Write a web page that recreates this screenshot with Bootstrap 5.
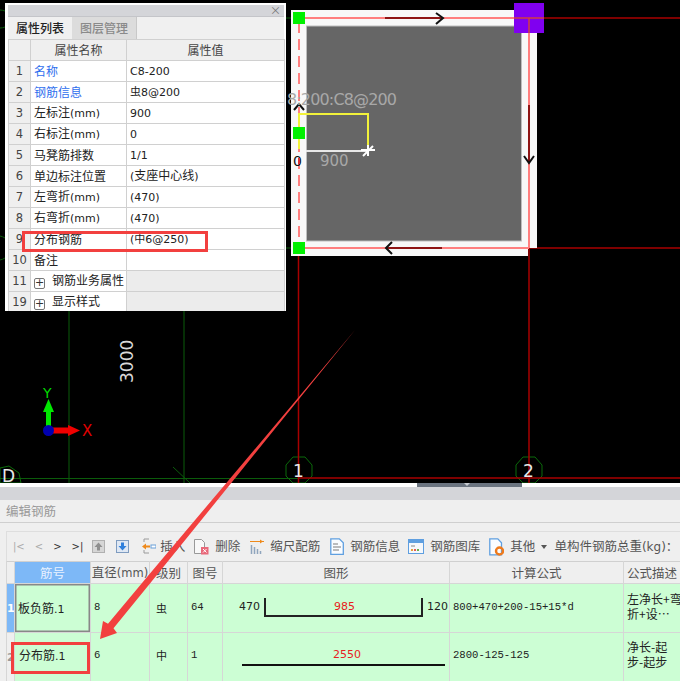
<!DOCTYPE html>
<html lang="zh">
<head>
<meta charset="utf-8">
<title>编辑钢筋</title>
<link href="https://cdn.jsdelivr.net/npm/bootstrap@5.3.0/dist/css/bootstrap.min.css" rel="stylesheet">
<style>
html,body{margin:0;background:#fff}
body{position:relative;width:680px;height:681px;overflow:hidden;font-family:"Noto Sans CJK SC","DejaVu Sans",sans-serif;font-size:12px;color:#333}
.lat{font-family:"DejaVu Sans",sans-serif;font-size:11px}
.mono{font-family:"Liberation Mono",monospace;font-size:10.6px;color:#222}
.cad-stage{position:relative;height:487px;background:#fff}
.cad-svg{display:block;background:#000}
.cad-svg text{font-family:"DejaVu Sans",sans-serif}
.prop-panel{position:absolute;left:5px;top:3px;width:281px;height:308px;background:#fff;padding:2px 2px 0 3px;overflow:hidden}
.panel-title{height:11px;background:#d4d5d9;font-size:11px;line-height:11px;color:#777;padding-right:3px}
.panel-tabs{height:23px;background:#f0f0f0;border-top:1px solid #c4c5c9;flex-wrap:nowrap}
.panel-tab{width:64px;line-height:21px;text-align:center;color:#222;font-weight:500}
.panel-tab.off{width:65px;background:#dcdcdc;color:#8a8a8a;border-right:1px solid #c8c8c8}
.prop-grid{width:276px;table-layout:fixed;--bs-table-border-color:#d0d0d0;--bs-table-bg:#fff;margin:0;border-top:1px solid #d0d0d0;border-left:1px solid #d0d0d0}
.prop-grid td,.prop-grid th{height:21px;padding:0 0 0 3px;font-weight:400;line-height:14px;color:#222;white-space:nowrap;overflow:hidden;vertical-align:middle}
.prop-grid thead th{text-align:center;background:#efefef;color:#444;padding:0}
.prop-grid .ix{padding:0;text-align:center;background:#efefef;color:#444;font-family:"DejaVu Sans",sans-serif;font-size:11.5px}
.prop-grid .lnk{color:#2f6fee}
.prop-grid .gp{background:#ececec}
.plus-box{display:inline-block;width:11px;height:11px;border:1px solid #777;border-radius:2px;margin:0 7px 0 0;line-height:8px;text-align:center;font-size:11px;color:#333;vertical-align:-1px;font-family:"DejaVu Sans",sans-serif}
.drag-strip{position:absolute;left:417px;top:483px;width:105px;height:4px;background:#6b7480}
.drag-strip::after{content:"";position:absolute;left:47px;top:0;border:3px solid transparent;border-top-color:#c8ccd2}
.band{height:13px;background:#d4d5d9}
.edit-pane{background:#efefef;height:181px}
.pane-head{height:23px;line-height:22px;padding-left:6px;font-size:12.5px;color:#999;border-bottom:1px solid #cfcfcf}
.pane-tools{margin:8px 0 0 6px;height:30px;border-top:1px solid #dedede;border-left:1px solid #dedede;padding-left:6px;font-size:12.5px;color:#555;white-space:nowrap}
.pane-tools svg{flex:none;display:block}
.nav-glyph{font-family:"DejaVu Sans",sans-serif;font-size:10px;color:#333}
.nav-glyph.dim{color:#aaa}
.rebar-grid{margin:0 0 0 6px;width:674px;table-layout:fixed;--bs-table-border-color:#d6d6d6;border-top:1px solid #d0d0d0;border-left:1px solid #d6d6d6}
.rebar-grid th,.rebar-grid td{padding:0 0 0 3px;overflow:hidden;white-space:nowrap;vertical-align:middle;font-weight:400}
.rebar-grid thead th{height:22px;background:#efefef;color:#555;text-align:center;font-size:12.5px;padding:0;line-height:20px}
.rebar-grid thead th.cur{background:#7db8f7;color:#e8f2ff}
.rebar-grid tbody td{height:48px;background:#ccfed4;color:#222;line-height:15px}
.rebar-grid tbody td.rn{padding:0;background:#efefef;color:#999;font-weight:700;font-size:11px;font-family:"DejaVu Sans",sans-serif}
.rebar-grid tbody td.rn.on{background:#7db8f7;color:#fff}
.rebar-grid tbody td.sel{box-shadow:inset 0 0 0 1.5px #888}
.rebar-grid tbody td.shp{padding:0}
.rebar-grid tbody td.rise{padding-bottom:4px}
.rebar-grid tbody td.lift{padding-bottom:6px}
.rebar-grid tbody td.nudge{padding-left:4px;padding-bottom:4px}
.shp svg{display:block}
.shp text{font-family:"DejaVu Sans",sans-serif;font-size:11px}
.bar-sym{font-size:11px;margin-left:3px}
.mark-layer{position:absolute;left:0;top:0;pointer-events:none}
</style>
</head>
<body>
<div class="cad-stage">
<svg class="cad-svg" width="680" height="483" viewBox="0 0 680 483">
  <g stroke="#0b5c0b" fill="none" stroke-width="1">
    <line x1="69" y1="311" x2="69" y2="483"/>
    <line x1="184" y1="311" x2="184" y2="483"/>
    <line x1="0" y1="478.500" x2="298" y2="478.500"/>
    <line x1="173" y1="467" x2="190" y2="483"/>
    <line x1="285" y1="18" x2="293" y2="18"/>
    <line x1="285" y1="248" x2="293" y2="248"/>
    <polygon stroke="#0b6a0b" points="293,457 305,457 312,465 312,476 305,483 293,483 286,476 286,465"/>
    <polygon stroke="#0b6a0b" points="523,457 535,457 542,465 542,476 535,483 523,483 516,476 516,465"/>
    <polygon stroke="#0b6a0b" points="0,468 9,466 19,473 21,483 0,483"/>
    <path d="M5 11 A16 16 0 0 0 0 10" />
    <path d="M5 27 A12 12 0 0 1 0 28" />
    <path d="M5 238 A14 14 0 0 0 0 236" />
    <path d="M5 258 A14 14 0 0 1 0 260" />
  </g>
  <g stroke="#a80000" fill="none" stroke-width="1.500">
    <line x1="298.500" y1="255" x2="298.500" y2="483"/>
    <line x1="529" y1="248" x2="529" y2="483"/>
    <line x1="298" y1="478" x2="680" y2="478"/>
    <line x1="536" y1="18" x2="680" y2="18"/>
    <line x1="529" y1="248" x2="680" y2="248"/>
  </g>
  <polygon fill="#f8f8f8" points="291,10 537,10 537,248 528,248 528,256 291,256"/>
  <rect x="306.500" y="26" width="215" height="215" fill="#666" stroke="#bdbdbd" stroke-width="1"/>
  <g stroke="#ff7f7f" fill="none" stroke-width="2">
    <line x1="298" y1="18" x2="529" y2="18"/>
    <line x1="529" y1="18" x2="529" y2="248"/>
    <line x1="298" y1="248" x2="529" y2="248"/>
    <line x1="299" y1="22" x2="299" y2="248" stroke-dasharray="11 6"/>
  </g>
  <rect x="514" y="3" width="30" height="30" fill="#8000f0"/>
  <line x1="529" y1="18" x2="529" y2="33" stroke="#d04040" stroke-width="1.500"/>
  <line x1="514" y1="18" x2="544" y2="18" stroke="#d04040" stroke-width="1.500"/>
  <g stroke="#8f1515" stroke-width="2" fill="none">
    <line x1="385" y1="18" x2="443" y2="18"/>
    <line x1="529" y1="105" x2="529" y2="162"/>
    <line x1="442" y1="248" x2="386" y2="248"/>
  </g>
  <g stroke="#111" stroke-width="2" fill="none">
    <polyline points="436,13 443,18 436,24"/>
    <polyline points="524,156 529,163 534,156"/>
    <polyline points="392,242 386,248 392,254"/>
    <polyline points="294,110 299,104 304,110"/>
  </g>
  <g fill="#00f000">
    <rect x="293" y="12" width="12" height="12"/>
    <rect x="293" y="127" width="12" height="12"/>
    <rect x="293" y="242" width="12" height="12"/>
  </g>
  <polyline points="299,127 299,114 368,114 368,150" fill="none" stroke="#f2f23a" stroke-width="2"/>
  <line x1="299" y1="139" x2="299" y2="149" stroke="#f2f23a" stroke-width="2"/>
  <line x1="306" y1="151" x2="368" y2="151" stroke="#e8e8e8" stroke-width="2"/>
  <g stroke="#fff" stroke-width="2"><line x1="363" y1="156" x2="373" y2="146"/><line x1="361" y1="150" x2="375" y2="150"/><line x1="368" y1="145" x2="368" y2="156"/></g>
  <text x="287" y="105" font-size="16" fill="#a8a8a8" textLength="110">8:200:C8@200</text>
  <text x="320" y="166" font-size="15" fill="#a8a8a8">900</text>
  <text x="293" y="166" font-size="14" fill="#111">0</text>
  <line x1="299" y1="158" x2="299" y2="164" stroke="#e03030" stroke-width="2"/>
  <text font-size="17" fill="#d8d8d8" transform="translate(133,383) rotate(-90)">3000</text>
  <rect x="46" y="408" width="5" height="22" fill="#00e800"/>
  <polygon points="48.500,399 54,412 43,412" fill="#00e800"/>
  <text x="43" y="398" font-size="14" fill="#00d800">Y</text>
  <rect x="48" y="427.500" width="22" height="6" fill="#f00000"/>
  <polygon points="80,430.500 68,425 68,436" fill="#f00000"/>
  <text x="82" y="436" font-size="15" fill="#e00000">X</text>
  <circle cx="48.500" cy="430.500" r="5.500" fill="#0000b0"/>
  <text x="2" y="482" font-size="17" fill="#e8e8e8">D</text>
  <text x="293" y="477" font-size="17" fill="#e8e8e8">1</text>
  <text x="523" y="477" font-size="17" fill="#e8e8e8">2</text>
</svg>
<div class="drag-strip"></div>

<div class="prop-panel">
  <div class="panel-title text-end">×</div>
  <div class="panel-tabs d-flex">
    <div class="panel-tab">属性列表</div>
    <div class="panel-tab off">图层管理</div>
  </div>
  <table class="table table-bordered prop-grid">
    <colgroup><col style="width:22px"><col style="width:96px"><col style="width:158px"></colgroup>
    <thead><tr><th></th><th>属性名称</th><th>属性值</th></tr></thead>
    <tbody>
      <tr><td class="ix">1</td><td class="lnk">名称</td><td><span class="lat">C8-200</span></td></tr>
      <tr><td class="ix">2</td><td class="lnk">钢筋信息</td><td><span class="bar-sym" style="margin:0">虫</span><span class="lat">8@200</span></td></tr>
      <tr><td class="ix">3</td><td>左标注<span class="lat">(mm)</span></td><td><span class="lat">900</span></td></tr>
      <tr><td class="ix">4</td><td>右标注<span class="lat">(mm)</span></td><td><span class="lat">0</span></td></tr>
      <tr><td class="ix">5</td><td>马凳筋排数</td><td><span class="lat">1/1</span></td></tr>
      <tr><td class="ix">6</td><td>单边标注位置</td><td><span class="lat">(</span>支座中心线<span class="lat">)</span></td></tr>
      <tr><td class="ix">7</td><td>左弯折<span class="lat">(mm)</span></td><td><span class="lat">(470)</span></td></tr>
      <tr><td class="ix">8</td><td>右弯折<span class="lat">(mm)</span></td><td><span class="lat">(470)</span></td></tr>
      <tr><td class="ix">9</td><td>分布钢筋</td><td><span class="lat">(</span><span class="bar-sym" style="margin:0">中</span><span class="lat">6@250)</span></td></tr>
      <tr><td class="ix">10</td><td>备注</td><td></td></tr>
      <tr><td class="ix">11</td><td><span class="plus-box">+</span>钢筋业务属性</td><td class="gp"></td></tr>
      <tr><td class="ix">19</td><td><span class="plus-box">+</span>显示样式</td><td class="gp"></td></tr>
    </tbody>
  </table>
</div>
</div>

<div class="band"></div>
<div class="edit-pane">
  <div class="pane-head">编辑钢筋</div>
  <div class="pane-tools d-flex align-items-center">
    <span class="nav-glyph dim" style="margin-right:10px">|&lt;</span>
    <span class="nav-glyph dim" style="margin-right:10px">&lt;</span>
    <span class="nav-glyph" style="margin-right:10px">&gt;</span>
    <span class="nav-glyph" style="margin-right:9px">&gt;|</span>
    <svg width="13" height="13" viewBox="0 0 13 13" style="margin-right:11px"><rect x=".5" y=".5" width="12" height="12" fill="#d6d6d6" stroke="#b0b0b0"/><path d="M6.500 2.500 10.500 7H8v3.500H5V7H2.500z" fill="#8f8f8f"/></svg>
    <svg width="13" height="13" viewBox="0 0 13 13" style="margin-right:12px"><rect x=".5" y=".5" width="12" height="12" fill="#dfe8f4" stroke="#7f9cc0"/><path d="M6.500 10.500 2.500 6H5V2.500h3V6h2.500z" fill="#2f7fdc"/></svg>
    <svg width="15" height="17" viewBox="0 0 15 17" style="margin-right:4px"><path d="M3 1h5M3 15h5M3 1v3M3 12v3" stroke="#9a9a9a" fill="none"/><path d="M1 8.500 5 5.500v2h4v2H5v2z" fill="#ee8a1c"/><rect x="10" y="7" width="5" height="3" fill="#fff" stroke="#6aa0d8"/></svg>
    <span style="margin-right:9px">插入</span>
    <svg width="15" height="17" viewBox="0 0 15 17" style="margin-right:6px"><path d="M.5 1.500h7l3 3v11H.5z" fill="#f8f8f8" stroke="#999"/><rect x="7" y="9" width="7.500" height="7.500" fill="#e8697a"/><path d="m9 11 3.500 3.500m0-3.500L9 14.500" stroke="#fff"/></svg>
    <span style="margin-right:10px">删除</span>
    <svg width="14" height="15" viewBox="0 0 14 15" style="margin-right:6px"><path d="M0 2.500h14" stroke="#ee8a1c"/><path d="m10 .5 3 2-3 2z" fill="#ee8a1c"/><path d="M1.500 6v9M4.500 8v7M7.500 10v5M10.500 12v3" stroke="#8fa5bd" stroke-width="1.500"/></svg>
    <span style="margin-right:10px">缩尺配筋</span>
    <svg width="14" height="17" viewBox="0 0 14 17" style="margin-right:6px"><path d="M.8.800h8.500l4 4v11.500H.8z" fill="#fafcff" stroke="#5f9fe0" stroke-width="1.300"/><path d="M3 6h5M3 9h8M3 12h6" stroke="#7a7a7a"/></svg>
    <span style="margin-right:8px">钢筋信息</span>
    <svg width="16" height="15" viewBox="0 0 16 15" style="margin-right:6px"><rect x=".5" y=".5" width="15" height="14" fill="#f5f8fc" stroke="#5f9fe0"/><rect x="1" y="1" width="14" height="3" fill="#5f9fe0"/><path d="M3 7h4" stroke="#888"/><path d="M3 11h2" stroke="#e5a03a" stroke-width="2"/><path d="M6 11h2" stroke="#e55a5a" stroke-width="2"/><path d="M9 11h2" stroke="#6ab04a" stroke-width="2"/></svg>
    <span style="margin-right:9px">钢筋图库</span>
    <svg width="15" height="18" viewBox="0 0 15 18" style="margin-right:6px"><path d="M.8.800h8l3.700 4v12H.8z" fill="#fafcff" stroke="#5f9fe0" stroke-width="1.300"/><circle cx="10.500" cy="13" r="3.500" fill="none" stroke="#ee7a1c" stroke-width="2.400"/></svg>
    <span style="margin-right:6px">其他</span>
    <svg width="6" height="4" viewBox="0 0 6 4" style="margin-right:7px"><path d="M0 0h6L3 4z" fill="#555"/></svg>
    <span>单构件钢筋总重<span class="lat" style="font-size:12px">(kg)</span>：</span>
  </div>
  <table class="table table-bordered rebar-grid">
    <colgroup><col style="width:8px"><col style="width:76px"><col style="width:59px"><col style="width:38px"><col style="width:35px"><col style="width:227px"><col style="width:174px"><col style="width:57px"></colgroup>
    <thead><tr><th></th><th class="cur">筋号</th><th>直径<span class="lat" style="font-size:11.5px">(mm)</span></th><th>级别</th><th>图号</th><th>图形</th><th>计算公式</th><th>公式描述</th></tr></thead>
    <tbody>
      <tr>
        <td class="rn on">1</td>
        <td class="sel">板负筋<span class="lat">.1</span></td>
        <td class="rise"><span class="mono">8</span></td>
        <td><span class="bar-sym">虫</span></td>
        <td class="rise"><span class="mono">64</span></td>
        <td class="shp"><svg width="227" height="48" viewBox="0 0 227 48"><text x="16" y="26" fill="#222">470</text><polyline points="42,14 42,32 199,32 199,14" fill="none" stroke="#222" stroke-width="2"/><text x="111" y="26" fill="#e82020">985</text><text x="204" y="26" fill="#222">120</text></svg></td>
        <td class="rise"><span class="mono">800+470+200-15+15*d</span></td>
        <td class="rise">左净长+弯<br>折+设…</td>
      </tr>
      <tr>
        <td class="rn">2</td>
        <td class="nudge">分布筋<span class="lat">.1</span></td>
        <td class="lift"><span class="mono">6</span></td>
        <td class="rise"><span class="bar-sym">中</span></td>
        <td class="lift"><span class="mono">1</span></td>
        <td class="shp"><svg width="227" height="48" viewBox="0 0 227 48"><text x="110" y="25" fill="#e82020">2550</text><line x1="19" y1="32" x2="222" y2="32" stroke="#111" stroke-width="2"/></svg></td>
        <td class="lift"><span class="mono">2800-125-125</span></td>
        <td class="lift">净长-起<br>步-起步</td>
      </tr>
    </tbody>
  </table>
</div>

<svg class="mark-layer" width="680" height="681" viewBox="0 0 680 681">
  <rect x="23.500" y="232.500" width="183" height="18" fill="none" stroke="#f2403f" stroke-width="3"/>
  <rect x="12.500" y="643.500" width="76" height="29" fill="none" stroke="#f2403f" stroke-width="3"/>
  <polygon fill="#f2403f" points="355,330 301.900,395.400 227,488.300 151.200,582 113.500,628.200 117,633 100,639 103,621 108,623.800 146.200,578 224,485.700 300.900,394.600"/>
</svg>
<script src="https://cdn.jsdelivr.net/npm/bootstrap@5.3.0/dist/js/bootstrap.bundle.min.js"></script>
</body>
</html>
